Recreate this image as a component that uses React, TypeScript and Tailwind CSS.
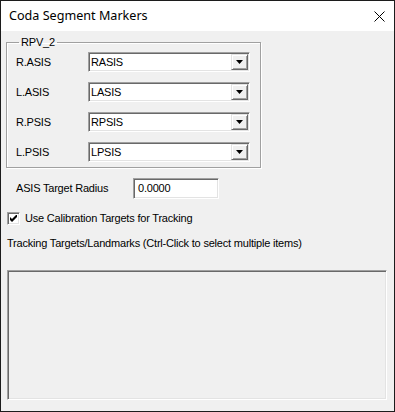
const sunken =
  "border border-t-[#a0a0a0] border-l-[#a0a0a0] border-r-white border-b-white shadow-[inset_1px_1px_0_#696969,inset_-1px_-1px_0_#e3e3e3]";

const markers = [
  { label: "R.ASIS", value: "RASIS" },
  { label: "L.ASIS", value: "LASIS" },
  { label: "R.PSIS", value: "RPSIS" },
  { label: "L.PSIS", value: "LPSIS" },
];

function Combo({ value }: { value: string }) {
  return (
    <div className={`flex h-[20px] w-[162px] bg-white ${sunken}`}>
      <div className="flex flex-1 items-center pl-[2px] pt-[1px]">{value}</div>
      <div className="m-[1px] flex w-[17px] items-center justify-center border border-t-[#e3e3e3] border-l-[#e3e3e3] border-r-[#696969] border-b-[#696969] bg-[#f0f0f0] shadow-[inset_1px_1px_0_#ffffff,inset_-1px_-1px_0_#a0a0a0]">
        <svg width="7" height="4" viewBox="0 0 7 4">
          <path d="M0 0h7L3.5 4z" fill="#000" />
        </svg>
      </div>
    </div>
  );
}

export default function App() {
  return (
    <div
      className="flex h-[412px] w-[395px] flex-col border border-[#1c1c1c] bg-[#f0f0f0] text-[11px] tracking-[-0.2px] text-black"
      style={{ fontFamily: '"Liberation Sans", Arial, sans-serif' }}
    >
      {/* title bar */}
      <div className="flex h-[30px] items-center justify-between bg-white pl-[8px] pr-[9px]">
        <span className="text-[12.6px] tracking-normal" style={{ fontFamily: '"Noto Sans", sans-serif' }}>
          Coda Segment Markers
        </span>
        <svg width="11" height="11" viewBox="0 0 11 11">
          <path d="M0.5 0.5l10 10M10.5 0.5l-10 10" stroke="#000" strokeWidth="1" />
        </svg>
      </div>

      <div className="flex flex-1 flex-col px-[5px] pt-[4px]">
        {/* group box */}
        <fieldset className="w-[255px] border border-[#a0a0a0] px-[9px] pb-[5px] pt-[3px] shadow-[inset_1px_1px_0_#fff,1px_1px_0_#fff]">
          <legend className="ml-[3px] px-[2px] leading-[14px]">RPV_2</legend>
          <div className="flex flex-col gap-[10px]">
            {markers.map((m) => (
              <div key={m.label} className="flex items-center">
                <span className="w-[72px]">{m.label}</span>
                <Combo value={m.value} />
              </div>
            ))}
          </div>
        </fieldset>

        <div className="mt-[10px] flex items-center pl-[10px]">
          <span className="w-[117px]">ASIS Target Radius</span>
          <div className={`flex h-[21px] w-[86px] items-center bg-white pl-[4px] ${sunken}`}>0.0000</div>
        </div>

        <div className="mt-[11px] flex items-center pl-[1px]">
          <div className={`flex h-[13px] w-[13px] items-center justify-center bg-white ${sunken}`}>
            <svg width="7" height="7" viewBox="0 0 7 7">
              <path d="M0 2v3l2 2 5-5V-1L2 4z" fill="#000" />
            </svg>
          </div>
          <span className="ml-[5px]">Use Calibration Targets for Tracking</span>
        </div>

        <div className="mt-[8px] pl-[1px]">Tracking Targets/Landmarks (Ctrl-Click to select multiple items)</div>

        <div className={`ml-[1px] mt-[19px] h-[130px] w-[380px] ${sunken}`} />
      </div>
    </div>
  );
}
